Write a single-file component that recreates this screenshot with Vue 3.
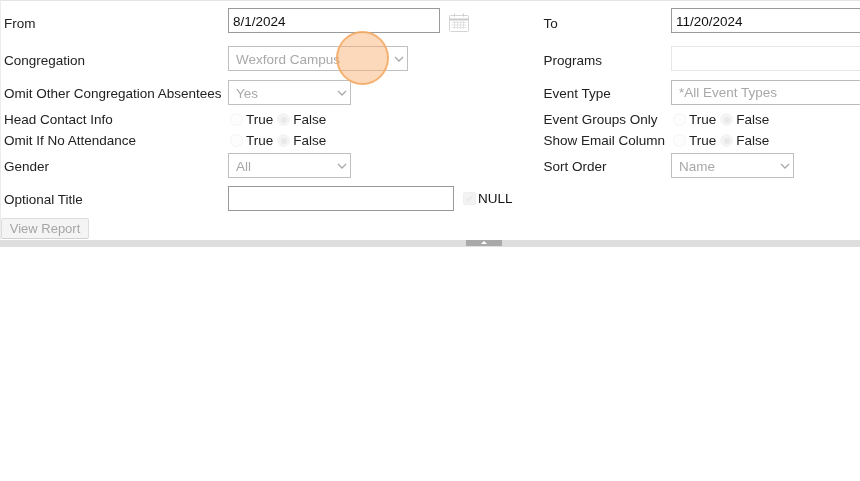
<script setup>
const radios = [
  { label: 'Head Contact Info', label2: 'Event Groups Only' },
  { label: 'Omit If No Attendance', label2: 'Show Email Column' }
]
</script>

<template>
  <div class="page">
    <form class="form" @submit.prevent>
      <div class="grid">
        <label class="lbl r1">From</label>
        <div class="cell date-cell">
          <input class="input date" value="8/1/2024" />
          <svg class="cal" width="20" height="19" viewBox="0 0 20 19" fill="none" stroke="#d4d4d4">
            <rect x="0.5" y="2.5" width="19" height="16" rx="1" />
            <path d="M0.5 6.5h19" stroke="#cbcbcb" stroke-width="2" />
            <path d="M5.5 0.5v3M14.5 0.5v3" stroke="#cbcbcb" />
            <path d="M3 9.5h14M3 12h14M3 14.5h14M5.5 8v8M8.5 8v8M11.5 8v8M14.5 8v8" stroke="#e2e2e2" />
          </svg>
        </div>
        <label class="lbl r1">To</label>
        <div class="cell"><input class="input date2" value="11/20/2024" /></div>

        <label class="lbl r2">Congregation</label>
        <div class="cell">
          <div class="sel w-camp">
            <select disabled><option>Wexford Campus</option></select>
            <svg class="chev" width="10" height="6" viewBox="0 0 10 6"><path d="M1 1l4 4 4-4" fill="none" stroke="#a8a8a8" stroke-width="1.3" /></svg>
          </div>
        </div>
        <label class="lbl r2">Programs</label>
        <div class="cell"><div class="programs"></div></div>

        <label class="lbl r3">Omit Other Congregation Absentees</label>
        <div class="cell">
          <div class="sel w-short">
            <select disabled><option>Yes</option></select>
            <svg class="chev" width="10" height="6" viewBox="0 0 10 6"><path d="M1 1l4 4 4-4" fill="none" stroke="#a8a8a8" stroke-width="1.3" /></svg>
          </div>
        </div>
        <label class="lbl r3">Event Type</label>
        <div class="cell"><input class="input date2 ph" disabled placeholder="*All Event Types" /></div>

        <template v-for="row in radios" :key="row.label">
          <label class="lbl r4">{{ row.label }}</label>
          <div class="radios">
            <span class="radio"></span><span class="rt">True</span>
            <span class="radio on"></span><span class="rt">False</span>
          </div>
          <label class="lbl r4">{{ row.label2 }}</label>
          <div class="radios">
            <span class="radio"></span><span class="rt">True</span>
            <span class="radio on"></span><span class="rt">False</span>
          </div>
        </template>

        <label class="lbl r3">Gender</label>
        <div class="cell">
          <div class="sel w-short">
            <select disabled><option>All</option></select>
            <svg class="chev" width="10" height="6" viewBox="0 0 10 6"><path d="M1 1l4 4 4-4" fill="none" stroke="#a8a8a8" stroke-width="1.3" /></svg>
          </div>
        </div>
        <label class="lbl r3">Sort Order</label>
        <div class="cell">
          <div class="sel w-short">
            <select disabled><option>Name</option></select>
            <svg class="chev" width="10" height="6" viewBox="0 0 10 6"><path d="M1 1l4 4 4-4" fill="none" stroke="#a8a8a8" stroke-width="1.3" /></svg>
          </div>
        </div>

        <label class="lbl r3">Optional Title</label>
        <div class="cell title-cell">
          <input class="input title" />
          <span class="check">
            <svg width="9" height="9" viewBox="0 0 9 9"><path d="M1.5 4.5l2 2.2 4-5" fill="none" stroke="#e8e8e8" stroke-width="1.4" /></svg>
          </span>
          <span class="null">NULL</span>
        </div>
      </div>
      <button class="btn" disabled>View Report</button>
    </form>

    <div class="splitter">
      <span class="handle"><i></i></span>
    </div>

    <div class="click"></div>
  </div>
</template>

<style scoped>
.page {
  position: relative;
  width: 860px;
  height: 481px;
  overflow: hidden;
  background: #fff;
  font-family: "Liberation Sans", Arial, sans-serif;
  font-size: 13.5px;
  color: #222;
  filter: blur(0.3px);
}
.form {
  height: 240px;
  box-sizing: border-box;
  border-top: 1px solid #e4e4e4;
  border-left: 1px solid #ececec;
  padding: 7px 0 0 3px;
}
.grid {
  display: grid;
  grid-template-columns: 224px 315.5px 127.5px 240px;
  grid-template-rows: 38px 34px 31px 21px 21px 33px 32px;
}
.lbl { display: block; line-height: 16px; white-space: nowrap; }
.r1 { padding-top: 8px; }
.r2 { padding-top: 7px; }
.r3 { padding-top: 6px; }
.r4 { padding-top: 1px; }
.cell { display: flex; align-items: flex-start; }
.input {
  box-sizing: border-box;
  height: 25px;
  border: 1px solid #999;
  padding: 1px 4px 0;
  margin: 0;
  font: inherit;
  color: #111;
  background: #fff;
  outline: none;
  border-radius: 0;
}
.date { width: 212px; }
.date2 { width: 232px; flex: none; }
.title { width: 226px; }
.ph { border-color: #bbb; padding: 0 4px 0 7px; }
.ph::placeholder { color: #a8a8a8; opacity: 1; }
.cal { margin: 5px 0 0 9px; }
.programs { width: 232px; height: 25px; box-sizing: border-box; border: 1px solid #e6e6e6; }
.sel { position: relative; height: 25px; }
.sel select {
  appearance: none;
  box-sizing: border-box;
  width: 100%;
  height: 100%;
  border: 1px solid #c0c0c0;
  border-radius: 0;
  background: #fff;
  padding: 1px 7px 0;
  font: inherit;
  color: #a8a8a8;
  opacity: 1;
}
.w-camp { width: 180px; }
.w-short { width: 123px; }
.chev { position: absolute; right: 4px; top: 10px; }
.radios { display: flex; align-items: center; height: 16px; }
.radio {
  box-sizing: border-box;
  width: 13px;
  height: 13px;
  border-radius: 50%;
  border: 1px solid #f4f4f4;
  background: #fdfdfd;
  margin: 1px 3px 0 2px;
  flex: none;
  display: inline-flex;
  align-items: center;
  justify-content: center;
}
.radio.on { background: #f4f4f4; }
.radio.on::after {
  content: "";
  width: 6px;
  height: 6px;
  border-radius: 50%;
  background: #e9e9e9;
}
.rt { margin-right: 2px; }
.title-cell { align-items: center; height: 25px; }
.check {
  box-sizing: border-box;
  width: 13px;
  height: 13px;
  margin-left: 9px;
  background: #f3f3f3;
  border: 1px solid #efefef;
  border-radius: 2px;
  display: inline-flex;
  align-items: center;
  justify-content: center;
}
.null { margin-left: 2px; color: #111; font-size: 13.5px; }
.btn {
  display: block;
  box-sizing: border-box;
  width: 88px;
  height: 21px;
  margin: 0 0 0 -3px;
  padding: 0;
  border: 1px solid #ddd;
  border-bottom-color: #d0d0d0;
  border-radius: 2px;
  background: #f4f4f4;
  font: inherit;
  font-size: 13px;
  color: #a6a6a6;
}
.splitter {
  position: relative;
  height: 7px;
  background: #dedede;
  display: flex;
  justify-content: flex-start;
}
.handle {
  display: flex;
  justify-content: center;
  box-sizing: border-box;
  width: 36px;
  height: 6px;
  margin-left: 466px;
  background: #a9a9a9;
  padding-top: 1px;
}
.handle i {
  width: 0;
  height: 0;
  border-left: 3px solid transparent;
  border-right: 3px solid transparent;
  border-bottom: 3px solid #fff;
}
.click {
  position: absolute;
  left: 336px;
  top: 31px;
  width: 53px;
  height: 54px;
  box-sizing: border-box;
  border-radius: 50%;
  background: rgba(250, 170, 105, 0.45);
  border: 2.5px solid rgba(243, 170, 100, 0.85);
}
</style>

<style>
html, body { margin: 0; background: #fff; overflow: hidden; }
</style>
